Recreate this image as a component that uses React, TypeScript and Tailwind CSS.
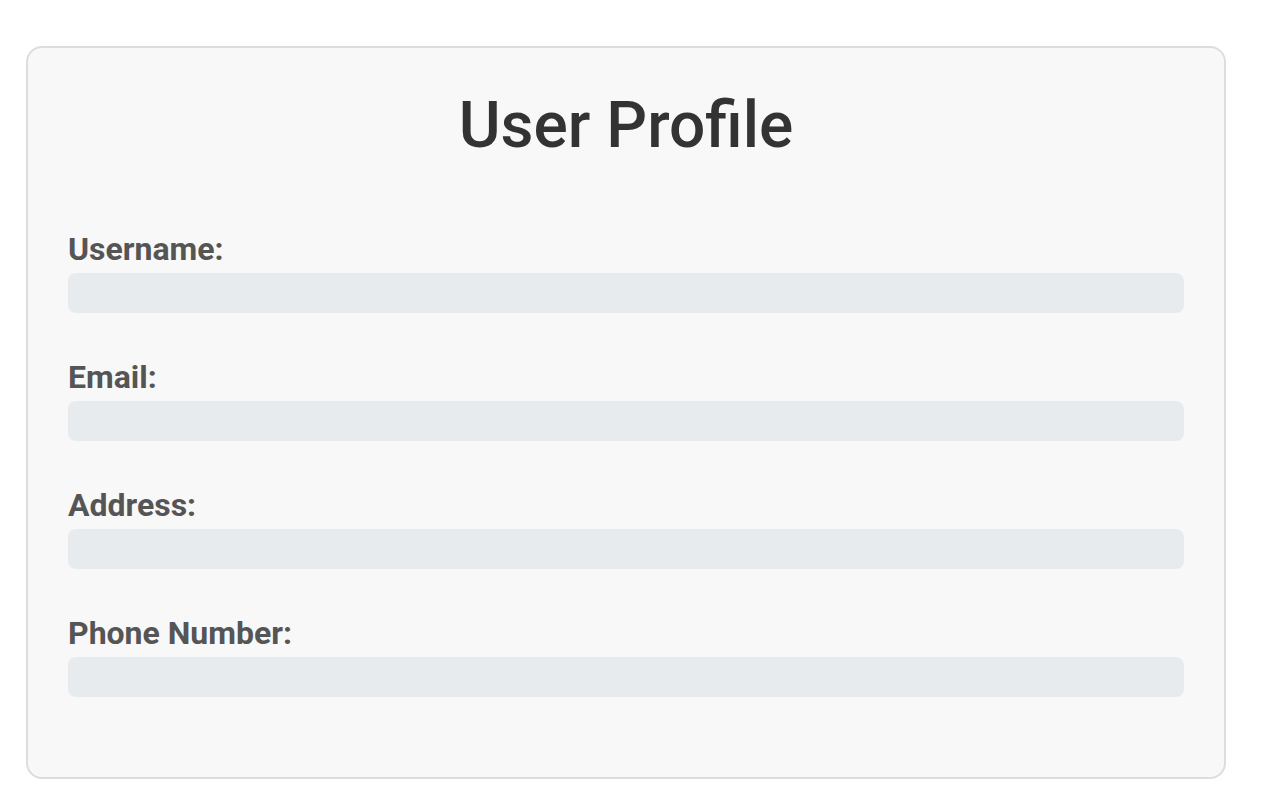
export default function App() {
  const fields = ["Username:", "Email:", "Address:", "Phone Number:"];

  return (
    <div className="min-h-screen bg-white pt-[46px] pl-[26px]" style={{ fontFamily: "Roboto, sans-serif" }}>
      <div className="w-[1200px] rounded-2xl border-2 border-[#dddddd] bg-[#f8f8f8] px-10 pt-10 pb-[35px]">
        <h1 className="text-center text-[64px] leading-[76px] font-medium text-[#333333]">User Profile</h1>
        <div className="mt-[66px]">
          {fields.map((f) => (
            <div key={f} className="mb-[45px]">
              <label className="block text-[32px] leading-[38px] font-bold text-[#555555] mb-[5px]">{f}</label>
              <div className="h-10 w-full rounded-lg bg-[#e8ebee]" />
            </div>
          ))}
        </div>
      </div>
    </div>
  );
}
